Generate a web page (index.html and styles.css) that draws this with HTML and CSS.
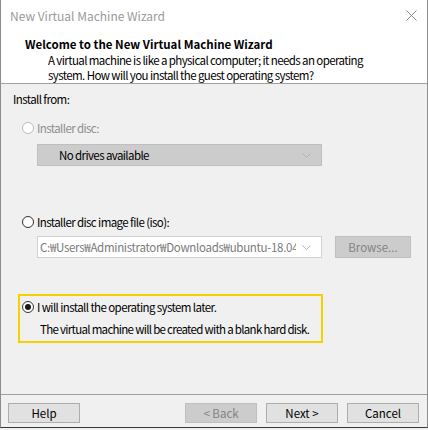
FILE: index.html
```html
<!DOCTYPE html>
<html>
<head>
<meta charset="utf-8">
<link rel="stylesheet" href="styles.css">
</head>
<body>
<div class="window">
  <div class="titlebar">
    <span class="title">New Virtual Machine Wizard</span>
    <svg class="close" width="11" height="11" viewBox="0 0 11 11"><path d="M0.5 0.5 L10.5 10.5 M10.5 0.5 L0.5 10.5" stroke="#8a8a8a" stroke-width="1" fill="none"/></svg>
  </div>
  <div class="header">
    <div class="heading">Welcome to the New Virtual Machine Wizard</div>
    <div class="desc">A virtual machine is like a physical computer; it needs an operating<br>system. How will you install the guest operating system?</div>
  </div>
  <div class="content">
    <div class="label">Install from:</div>
    <div class="radio-row disabled r1">
      <span class="radio"></span><span>Installer disc:</span>
    </div>
    <div class="combo combo-disabled">
      <span class="combo-text">No drives available</span>
      <svg class="chev" width="9" height="5" viewBox="0 0 9 5"><path d="M0.5 0.5 L4.5 4.5 L8.5 0.5" stroke="#b0b0b0" fill="none"/></svg>
    </div>
    <div class="radio-row r2">
      <span class="radio"></span><span>Installer disc image file (iso):</span>
    </div>
    <div class="iso-row">
      <div class="combo combo-iso">
        <span class="iso-text">C:₩Users₩Administrator₩Downloads₩ubuntu-18.04</span>
        <svg class="chev" width="9" height="5" viewBox="0 0 9 5"><path d="M0.5 0.5 L4.5 4.5 L8.5 0.5" stroke="#b8b8b8" fill="none"/></svg>
      </div>
      <div class="btn btn-disabled browse">Browse...</div>
    </div>
    <div class="highlight">
      <div class="radio-row r3">
        <span class="radio checked"></span><span>I will install the operating system later.</span>
      </div>
      <div class="note">The virtual machine will be created with a blank hard disk.</div>
    </div>
  </div>
  <div class="footer">
    <div class="btn">Help</div>
    <div class="spacer"></div>
    <div class="btn btn-disabled">&lt; Back</div>
    <div class="btn">Next &gt;</div>
    <div class="btn">Cancel</div>
  </div>
</div>
</body>
</html>
```

FILE: styles.css
```css
html, body {
  margin: 0;
  padding: 0;
  background: #f0f0f0;
}
body {
  font-family: "Noto Sans CJK KR", "Noto Sans", sans-serif;
  font-size: 11.5px;
  letter-spacing: -0.6px;
  color: #000;
}
.window {
  width: 428px;
  height: 428px;
  box-sizing: border-box;
  border-left: 1px solid #8c8c8c;
  border-right: 1px solid #8c8c8c;
  border-bottom: 1px solid #3a3a3a;
  background: #f0f0f0;
  display: flex;
  flex-direction: column;
}
.titlebar {
  height: 31px;
  flex: none;
  background: #fff;
  display: flex;
  align-items: center;
  padding-left: 9px;
  padding-right: 10px;
}
.title {
  color: #9a9a9a;
  font-size: 12px;
  letter-spacing: 0;
  flex: 1;
}
.close {
  display: block;
}
.header {
  background: #fff;
  flex: none;
  border-bottom: 1px solid #a0a0a0;
  padding: 6px 0 0 24px;
}
.heading {
  font-weight: bold;
  letter-spacing: 0;
  line-height: 15px;
}
.desc {
  line-height: 15px;
  padding-left: 23px;
  margin-top: 1px;
}
.content {
  padding: 7px 0 0 12px;
  flex: 1;
}
.label {
  line-height: 16px;
}
.radio-row {
  display: flex;
  align-items: center;
  line-height: 16px;
  gap: 3px;
  margin-left: 9px;
}
.radio {
  width: 12px;
  height: 12px;
  box-sizing: border-box;
  border: 1px solid #333;
  border-radius: 50%;
  background: #fff;
  flex: none;
  position: relative;
}
.radio.checked::after {
  content: "";
  position: absolute;
  left: 2px;
  top: 2px;
  width: 6px;
  height: 6px;
  border-radius: 50%;
  background: #1a1a1a;
}
.disabled {
  color: #8d8d8d;
}
.disabled .radio {
  border-color: #bcbcbc;
}
.r1 {
  margin-top: 13px;
}
.combo {
  width: 285px;
  height: 22px;
  box-sizing: border-box;
  display: flex;
  align-items: center;
  margin-left: 24px;
}
.combo-disabled {
  margin-top: 8px;
  background: #cccccc;
  border: 1px solid #bfbfbf;
  padding-left: 21px;
  padding-right: 10px;
}
.combo-text {
  flex: 1;
}
.r2 {
  margin-top: 48px;
}
.iso-row {
  display: flex;
  align-items: center;
  margin-top: 6px;
  gap: 13px;
}
.combo-iso {
  background: #fff;
  border: 1px solid #d0d0d0;
  padding-left: 2px;
  padding-right: 10px;
}
.iso-text {
  flex: 1;
  min-width: 0;
  white-space: nowrap;
  overflow: hidden;
  color: #7a7a7a;
  letter-spacing: -0.3px;
  margin-right: 6px;
}
.btn {
  width: 72px;
  height: 20px;
  box-sizing: border-box;
  border: 1px solid #adadad;
  background: #e1e1e1;
  display: flex;
  align-items: center;
  justify-content: center;
  line-height: 16px;
  letter-spacing: 0;
  flex: none;
}
.btn-disabled {
  background: #cccccc;
  border-color: #bfbfbf;
  color: #838383;
}
.browse {
  width: 76px;
  height: 22px;
}
.highlight {
  margin-top: 36px;
  margin-left: 5px;
  width: 305px;
  height: 49px;
  box-sizing: border-box;
  border: 2px solid #f8d000;
  padding: 3px 0 0 2px;
}
.r3 {
  margin-left: 0;
}
.note {
  line-height: 16px;
  margin-top: 6px;
  padding-left: 18px;
  white-space: nowrap;
  letter-spacing: -0.7px;
}
.footer {
  flex: none;
  border-top: 1px solid #a0a0a0;
  display: flex;
  gap: 9px;
  padding: 8px 0 0 7px;
  height: 33px;
  box-sizing: border-box;
}
.spacer {
  width: 87px;
}
```
